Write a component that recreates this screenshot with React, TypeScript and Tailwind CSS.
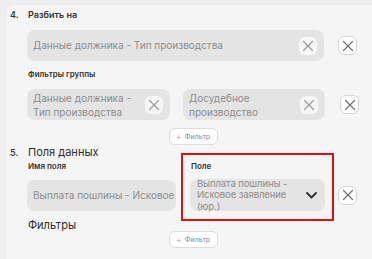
import React from "react";

const Cross: React.FC<{ size?: number; color?: string }> = ({ size = 11, color = "#8d8d8d" }) => (
    <svg width={size} height={size} viewBox="0 0 12 12" fill="none">
        <path d="M1.5 1.5 L10.5 10.5 M10.5 1.5 L1.5 10.5" stroke={color} strokeWidth="1.2" strokeLinecap="round" />
    </svg>
);

const Chevron: React.FC = () => (
    <svg width="11" height="7" viewBox="0 0 11 7" fill="none">
        <path d="M1 1 L5.5 5.5 L10 1" stroke="#2f2f2f" strokeWidth="1.8" strokeLinecap="round" strokeLinejoin="round" />
    </svg>
);

// clear button that sits inside a field
const ClearButton: React.FC = () => (
    <div className="flex h-[18px] w-[18px] shrink-0 items-center justify-center rounded-md bg-[#f7f7f7]">
        <Cross size={12} color="#9a9a9a" />
    </div>
);

// remove button outside a field
const RemoveButton: React.FC<{ className?: string }> = ({ className = "" }) => (
    <div
        className={
            "flex h-[19px] w-[19px] shrink-0 items-center justify-center rounded-md border border-[#d6d6d6] bg-white " +
            className
        }
    >
        <Cross size={12} color="#6f6f6f" />
    </div>
);

const FilterButton: React.FC = () => (
    <div className="flex justify-center">
        <div className="flex h-[17px] w-[49px] items-center justify-center gap-[3px] rounded-md border border-[#dcdcdc] bg-white text-[7px] leading-none text-[#8a8a8a]">
            <span className="text-[9px] font-light text-[#a0a0a0]">+</span>
            <span>Фильтр</span>
        </div>
    </div>
);

const Chip: React.FC<{ lines: string[]; width: string }> = ({ lines, width }) => (
    <div className={"flex h-[31px] items-center justify-between rounded-lg bg-[#e4e4e4] pl-[6px] pr-[7px] " + width}>
        <div className="text-[10px] leading-[14px] text-[#8c8c8c]">
            {lines.map((l) => (
                <div key={l}>{l}</div>
            ))}
        </div>
        <ClearButton />
    </div>
);

export default function App() {
    return (
        <div
            className="h-[259px] w-[372px] overflow-hidden bg-[#eeeeee]"
            style={{ fontFamily: "Inter, 'Noto Sans', sans-serif" }}
        >
            <div className="ml-[7px] mt-[5px] h-[254px] w-[365px] rounded-tl-md bg-[#f5f5f5] pl-[3px] pt-[4px]">
                {/* Section 4 */}
                <div className="flex">
                    <div className="w-[17px] text-[9px] font-semibold leading-[12px] text-[#3a3a3a]">4.</div>
                    <div className="w-[332px]">
                        <div className="pl-px text-[9px] font-semibold leading-[12px] text-[#333]">Разбить на</div>

                        <div className="mt-[9px] flex items-center">
                            <div className="flex h-[31px] w-[297px] items-center justify-between rounded-lg bg-[#e4e4e4] pl-[6px] pr-[7px]">
                                <span className="text-[10px] text-[#8c8c8c]">Данные должника - Тип производства</span>
                                <ClearButton />
                            </div>
                            <RemoveButton className="ml-[14px]" />
                        </div>

                        <div className="mt-[7px] pl-px text-[8px] font-semibold leading-[12px] text-[#333]">
                            Фильтры группы
                        </div>

                        <div className="mt-[9px] flex items-center">
                            <Chip lines={["Данные должника -", "Тип производства"]} width="w-[143px]" />
                            <div className="ml-[13px]">
                                <Chip lines={["Досудебное", "производство"]} width="w-[142px]" />
                            </div>
                            <RemoveButton className="ml-[15px]" />
                        </div>

                        <div className="mt-[8px]">
                            <FilterButton />
                        </div>
                    </div>
                </div>

                {/* Section 5 */}
                <div className="flex">
                    <div className="w-[17px] pt-[2px] text-[9px] font-semibold leading-[12px] text-[#3a3a3a]">5.</div>
                    <div className="w-[332px]">
                        <div className="pl-px text-[11px] leading-[14px] text-[#2e2e2e]">Поля данных</div>

                        <div className="mt-[2px] flex">
                            <div className="w-[149px]">
                                <div className="pl-px text-[8px] font-semibold leading-[10px] text-[#333]">Имя поля</div>
                                <div className="mt-[9px] flex h-[31px] items-center overflow-hidden rounded-lg bg-[#e4e4e4] pl-[6px]">
                                    <span className="whitespace-nowrap text-[10px] text-[#8c8c8c]">
                                        Выплата пошлины - Исковое заявление (юр.)
                                    </span>
                                </div>
                            </div>

                            <div className="relative ml-[14px]">
                                <div className="pl-px text-[8px] font-semibold leading-[10px] text-[#333]">Поле</div>
                                <div className="mt-[8px] flex items-center">
                                    <div className="flex h-[32px] w-[135px] items-center justify-between rounded-lg bg-[#e4e4e4] pl-[7px] pr-[8px]">
                                        <div className="text-[9.5px] leading-[11.5px] tracking-[-0.1px] text-[#8c8c8c]">
                                            <div>Выплата пошлины -</div>
                                            <div>Исковое заявление</div>
                                            <div>(юр.)</div>
                                        </div>
                                        <Chevron />
                                    </div>
                                    <RemoveButton className="ml-[13px]" />
                                </div>
                                {/* highlight frame */}
                                <div className="pointer-events-none absolute -left-[9px] -top-[8px] h-[68px] w-[153px] border-2 border-[#e01010]" />
                            </div>
                        </div>

                        <div className="mt-[8px] pl-px text-[11px] leading-[12px] text-[#2e2e2e]">Фильтры</div>
                        <FilterButton />
                    </div>
                </div>
            </div>
        </div>
    );
}
